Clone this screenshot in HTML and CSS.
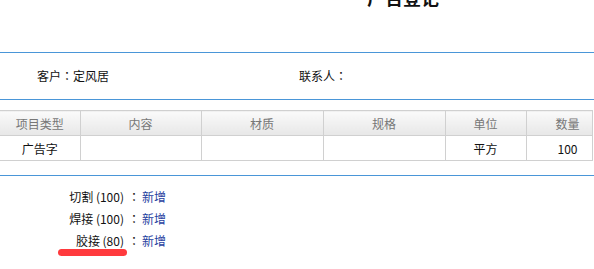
FILE: index.html
```html
<!DOCTYPE html>
<html lang="zh-CN">
<head>
    <meta charset="UTF-8">
    <title>广告登记</title>
    <link rel="stylesheet" href="styles.css">
</head>
<body>
    <div class="page">
        <div class="header">
            <h1 class="title">广告登记</h1>
        </div>

        <div class="info">
            <span class="info-item info-customer">客户<span class="colon">：</span>定风居</span>
            <span class="info-item info-contact">联系人<span class="colon">：</span></span>
        </div>

        <div class="grid-wrap">
            <table class="grid">
                <colgroup>
                    <col style="width: 80px">
                    <col style="width: 121px">
                    <col style="width: 122px">
                    <col style="width: 122px">
                    <col style="width: 81px">
                    <col style="width: 83px">
                </colgroup>
                <thead>
                    <tr>
                        <th>项目类型</th>
                        <th>内容</th>
                        <th>材质</th>
                        <th>规格</th>
                        <th>单位</th>
                        <th>数量</th>
                    </tr>
                </thead>
                <tbody>
                    <tr>
                        <td>广告字</td>
                        <td></td>
                        <td></td>
                        <td></td>
                        <td>平方</td>
                        <td>100</td>
                    </tr>
                </tbody>
            </table>
        </div>

        <div class="process">
            <div class="process-row">
                <span class="process-label">切割 (100)</span>
                <span class="colon process-colon">：</span>
                <a class="process-link" href="#">新增</a>
            </div>
            <div class="process-row">
                <span class="process-label">焊接 (100)</span>
                <span class="colon process-colon">：</span>
                <a class="process-link" href="#">新增</a>
            </div>
            <div class="process-row">
                <span class="process-label">胶接 (80)</span>
                <span class="colon process-colon">：</span>
                <a class="process-link" href="#">新增</a>
                <span class="mark"></span>
            </div>
        </div>
    </div>
</body>
</html>
```

FILE: styles.css
```css
:root {
    --line-blue: #4a96d8;
    --grid-line: #d0d0d0;
    --link: #1f3f9f;
}

* {
    margin: 0;
    padding: 0;
    box-sizing: border-box;
}

html, body {
    background: #fff;
    overflow: hidden;
}

body {
    font-family: "Noto Sans CJK SC", "Noto Sans", sans-serif;
    font-size: 12px;
    color: #111;
    width: 594px;
    height: 269px;
}

/* full-width colon drawn centred, as in the original */
.colon {
    display: inline-block;
    width: 12px;
    font-family: "Noto Sans CJK TC", "Noto Sans CJK JP", sans-serif;
    font-feature-settings: "locl" 0;
    text-align: center;
}

.header {
    display: flex;
    height: 53px;
    border-bottom: 1px solid var(--line-blue);
}

.title {
    margin-top: -15px;
    padding-left: 367px;
    font-size: 18px;
    line-height: 24px;
    font-weight: 700;
    height: 24px;
}

.info {
    display: flex;
    align-items: center;
    height: 47px;
    padding-bottom: 2px;
    border-bottom: 1px solid var(--line-blue);
}

.info-customer {
    padding-left: 37px;
    width: 299px;
}

.grid-wrap {
    margin-top: 10px;
    width: 593px;
    overflow: hidden;
    border-right: 1px solid var(--grid-line);
}

.grid {
    table-layout: fixed;
    width: 609px;
    border-collapse: collapse;
}

.grid th,
.grid td {
    border: 1px solid var(--grid-line);
    text-align: center;
    font-size: 12px;
    white-space: nowrap;
}

.grid th:first-child,
.grid td:first-child {
    border-left: none;
}

.grid th {
    height: 25px;
    font-weight: 400;
    color: #777;
    background: linear-gradient(#fafafa, #e7e7e7);
}

.grid td {
    height: 25px;
    color: #111;
}

.process {
    margin-top: 14px;
    padding-top: 9px;
    border-top: 1px solid var(--line-blue);
}

.process-row {
    display: flex;
    align-items: center;
    height: 22px;
    position: relative;
}

.process-label {
    width: 124px;
    text-align: right;
}

.process-colon {
    margin-left: 4px;
}

.process-link {
    margin-left: 2px;
    color: var(--link);
    text-decoration: none;
}

.mark {
    position: absolute;
    left: 58px;
    top: 20px;
    width: 69px;
    height: 7px;
    border-radius: 4px;
    background: #ff3a3d;
}
```
